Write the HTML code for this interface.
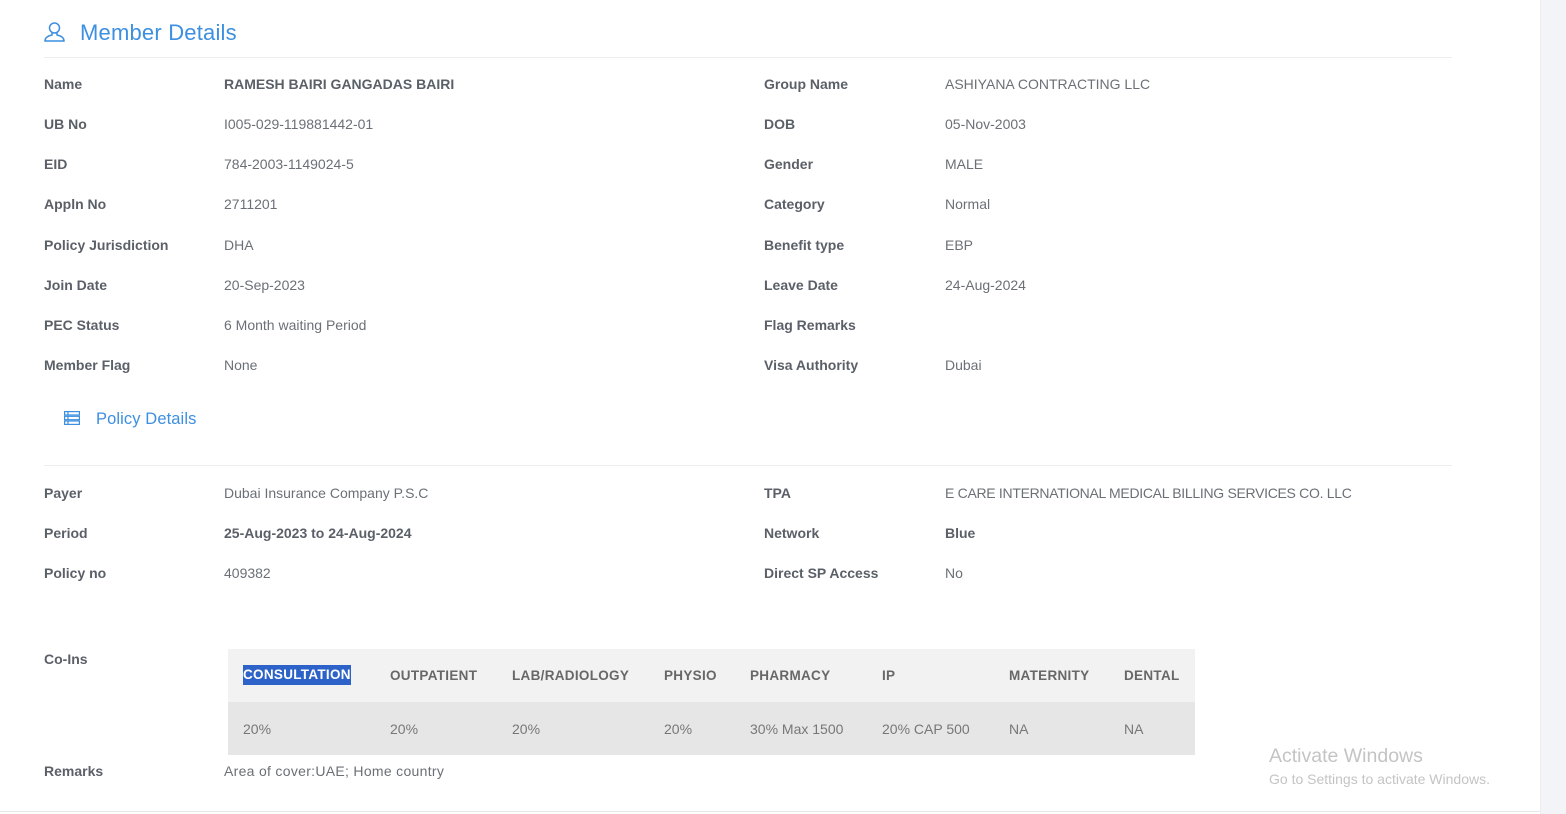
<!DOCTYPE html>
<html><head><meta charset="utf-8"><style>
html,body{margin:0;padding:0;width:1566px;height:814px;overflow:hidden;background:#fff;font-family:"Liberation Sans",sans-serif}
.a{position:absolute;white-space:nowrap;font-size:14px;line-height:16px}
.l{font-weight:bold;color:#5b6068}
.v{color:#6b7077}
.b{font-weight:bold;color:#5b6068}
.h{font-weight:bold;color:#676767;font-size:13.5px;letter-spacing:0.3px}
.t{color:#777;font-size:14px}
</style></head><body>
<div style="position:absolute;left:1540px;top:0;width:26px;height:814px;background:#f3f4f8;border-left:1px solid #eceef3"></div>
<div style="position:absolute;left:0;top:811px;width:1540px;height:1px;background:#e8e8e8"></div>
<svg style="position:absolute;left:44px;top:21px" width="22" height="22" viewBox="0 0 22 22" fill="none" stroke="#3d8fe0" stroke-width="1.5"><circle cx="10.5" cy="7" r="5"/><path d="M8 12 L8 14 Q1 15.5 1 20 L20 20 Q20 15.5 13 14 L13 12"/></svg>
<div class="a" style="left:80px;top:21px;font-size:22px;line-height:24px;color:#3d8fe0;letter-spacing:0.2px">Member Details</div>
<div style="position:absolute;left:44px;top:57px;width:1408px;height:1px;background:#eeeeee"></div>

<div class="a l" style="left:44px;top:76px">Name</div><div class="a b" style="left:224px;top:76px">RAMESH BAIRI GANGADAS BAIRI</div>
<div class="a l" style="left:44px;top:116px">UB No</div><div class="a v" style="left:224px;top:116px">I005-029-119881442-01</div>
<div class="a l" style="left:44px;top:156px">EID</div><div class="a v" style="left:224px;top:156px">784-2003-1149024-5</div>
<div class="a l" style="left:44px;top:196px">Appln No</div><div class="a v" style="left:224px;top:196px">2711201</div>
<div class="a l" style="left:44px;top:237px">Policy Jurisdiction</div><div class="a v" style="left:224px;top:237px">DHA</div>
<div class="a l" style="left:44px;top:277px">Join Date</div><div class="a v" style="left:224px;top:277px">20-Sep-2023</div>
<div class="a l" style="left:44px;top:317px">PEC Status</div><div class="a v" style="left:224px;top:317px">6 Month waiting Period</div>
<div class="a l" style="left:44px;top:357px">Member Flag</div><div class="a v" style="left:224px;top:357px">None</div>

<div class="a l" style="left:764px;top:76px">Group Name</div><div class="a v" style="left:945px;top:76px">ASHIYANA CONTRACTING LLC</div>
<div class="a l" style="left:764px;top:116px">DOB</div><div class="a v" style="left:945px;top:116px">05-Nov-2003</div>
<div class="a l" style="left:764px;top:156px">Gender</div><div class="a v" style="left:945px;top:156px">MALE</div>
<div class="a l" style="left:764px;top:196px">Category</div><div class="a v" style="left:945px;top:196px">Normal</div>
<div class="a l" style="left:764px;top:237px">Benefit type</div><div class="a v" style="left:945px;top:237px">EBP</div>
<div class="a l" style="left:764px;top:277px">Leave Date</div><div class="a v" style="left:945px;top:277px">24-Aug-2024</div>
<div class="a l" style="left:764px;top:317px">Flag Remarks</div>
<div class="a l" style="left:764px;top:357px">Visa Authority</div><div class="a v" style="left:945px;top:357px">Dubai</div>

<svg style="position:absolute;left:64px;top:411px" width="16" height="14" viewBox="0 0 16 14" fill="none" stroke="#3d8fe0" stroke-width="1.2"><rect x="0.6" y="0.6" width="14.8" height="3.4"/><rect x="0.6" y="5.3" width="14.8" height="3.4"/><rect x="0.6" y="10" width="14.8" height="3.4"/><path d="M4 0.6V4M4 5.3V8.7M4 10V13.4"/></svg>
<div class="a" style="left:96px;top:410px;font-size:16.5px;line-height:18px;color:#3d8fe0;letter-spacing:0.1px">Policy Details</div>
<div style="position:absolute;left:44px;top:465px;width:1408px;height:1px;background:#eeeeee"></div>

<div class="a l" style="left:44px;top:485px">Payer</div><div class="a v" style="left:224px;top:485px">Dubai Insurance Company P.S.C</div>
<div class="a l" style="left:44px;top:525px">Period</div><div class="a b" style="left:224px;top:525px">25-Aug-2023 to 24-Aug-2024</div>
<div class="a l" style="left:44px;top:565px">Policy no</div><div class="a v" style="left:224px;top:565px">409382</div>
<div class="a l" style="left:764px;top:485px">TPA</div><div class="a v" style="left:945px;top:485px;letter-spacing:-0.3px">E CARE INTERNATIONAL MEDICAL BILLING SERVICES CO. LLC</div>
<div class="a l" style="left:764px;top:525px">Network</div><div class="a b" style="left:945px;top:525px">Blue</div>
<div class="a l" style="left:764px;top:565px">Direct SP Access</div><div class="a v" style="left:945px;top:565px">No</div>

<div class="a l" style="left:44px;top:651px">Co-Ins</div>
<div style="position:absolute;left:228px;top:649px;width:967px;height:53px;background:#f2f2f2"></div>
<div style="position:absolute;left:228px;top:702px;width:967px;height:53px;background:#e6e6e6"></div>
<div class="a h" style="left:243px;background:#2d63c8;color:#fff;padding:2px 0;top:665px">CONSULTATION</div>
<div class="a h" style="left:390px;top:668px">OUTPATIENT</div>
<div class="a h" style="left:512px;top:668px">LAB/RADIOLOGY</div>
<div class="a h" style="left:664px;top:668px">PHYSIO</div>
<div class="a h" style="left:750px;top:668px">PHARMACY</div>
<div class="a h" style="left:882px;top:668px">IP</div>
<div class="a h" style="left:1009px;top:668px">MATERNITY</div>
<div class="a h" style="left:1124px;top:668px">DENTAL</div>
<div class="a t" style="left:243px;top:721px">20%</div>
<div class="a t" style="left:390px;top:721px">20%</div>
<div class="a t" style="left:512px;top:721px">20%</div>
<div class="a t" style="left:664px;top:721px">20%</div>
<div class="a t" style="left:750px;top:721px">30% Max 1500</div>
<div class="a t" style="left:882px;top:721px">20% CAP 500</div>
<div class="a t" style="left:1009px;top:721px">NA</div>
<div class="a t" style="left:1124px;top:721px">NA</div>

<div class="a l" style="left:44px;top:763px">Remarks</div><div class="a v" style="left:224px;top:763px;letter-spacing:0.3px">Area of cover:UAE; Home country</div>

<div class="a" style="left:1269px;top:745px;font-size:19.5px;line-height:22px;color:#c4c4c4">Activate Windows</div>
<div class="a" style="left:1269px;top:771px;font-size:14px;line-height:16px;color:#c4c4c4">Go to Settings to activate Windows.</div>
</body></html>
